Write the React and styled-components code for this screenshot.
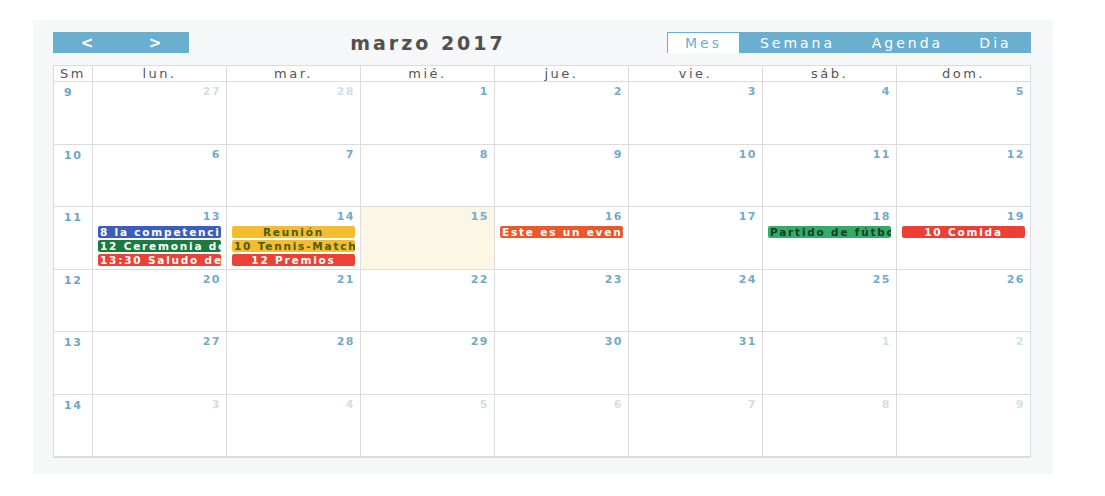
import React from "react";
import styled, { createGlobalStyle } from "styled-components";

const Global = createGlobalStyle`
  body {
    margin: 0;
    background: #ffffff;
    font-family: "DejaVu Sans", Verdana, sans-serif;
  }
`;

const Page = styled.div`
  padding: 20px 0 0 33px;
`;

const Panel = styled.div`
  width: 1020px;
  height: 454px;
  box-sizing: border-box;
  background: #f6f7f9;
  padding: 12px 22px 0 20px;
`;

const Toolbar = styled.div`
  display: flex;
  align-items: center;
  justify-content: space-between;
  height: 21px;
  margin-bottom: 12px;
`;

const Group = styled.div`
  display: flex;
  height: 21px;
  background: #6aafd0;
`;

const NavBtn = styled.div`
  width: 68px;
  display: flex;
  align-items: center;
  justify-content: center;
  color: #ffffff;
  font-size: 15px;
  font-weight: bold;
`;

const Title = styled.div`
  font-size: 19px;
  font-weight: bold;
  letter-spacing: 3px;
  color: #505050;
`;

const ViewBtn = styled.div`
  width: ${(p) => p.w}px;
  box-sizing: border-box;
  display: flex;
  align-items: center;
  justify-content: center;
  font-size: 14px;
  letter-spacing: 3px;
  color: ${(p) => (p.active ? "#6aafd0" : "#ffffff")};
  background: ${(p) => (p.active ? "#ffffff" : "transparent")};
  border: ${(p) => (p.active ? "1px solid #6aafd0" : "none")};
  border-bottom: none;
`;

const Table = styled.div`
  width: 978px;
  border: 1px solid #dcdcdc;
  border-right: none;
  background: #ffffff;
  box-sizing: border-box;
`;

const Row = styled.div`
  display: grid;
  grid-template-columns: 39px repeat(7, 1fr);
  height: ${(p) => p.h}px;
  border-bottom: 1px solid #dcdcdc;
`;

const HeadCell = styled.div`
  border-right: 1px solid #dcdcdc;
  text-align: center;
  font-size: 13px;
  letter-spacing: 2.5px;
  color: #555555;
  line-height: 15px;
`;

const WeekCell = styled.div`
  border-right: 1px solid #dcdcdc;
  font-size: 11px;
  font-weight: bold;
  letter-spacing: 1.5px;
  color: #6aa6c6;
  padding: 4px 0 0 10px;
`;

const DayCell = styled.div`
  border-right: 1px solid #dcdcdc;
  background: ${(p) => (p.today ? "#fcf7e4" : "transparent")};
  padding: 4px 5px 0 5px;
  min-width: 0;
  display: flex;
  flex-direction: column;
`;

const DayNum = styled.div`
  text-align: right;
  font-size: 11px;
  font-weight: bold;
  letter-spacing: 1.5px;
  line-height: 12px;
  color: ${(p) => (p.other ? "#cfe0ea" : "#72abc9")};
  margin-bottom: 3px;
`;

const Event = styled.div`
  height: 12px;
  line-height: 12px;
  margin-bottom: 2px;
  border-radius: 2px;
  font-size: 10.5px;
  font-weight: bold;
  letter-spacing: 1.8px;
  white-space: nowrap;
  overflow: hidden;
  padding: 0 2px;
  text-align: ${(p) => (p.center ? "center" : "left")};
  background: ${(p) => p.bg};
  color: ${(p) => p.fg || "#ffffff"};
`;

const heads = ["lun.", "mar.", "mié.", "jue.", "vie.", "sáb.", "dom."];

const weeks = [
  { n: 9, days: [[27, 1], [28, 1], [1], [2], [3], [4], [5]] },
  { n: 10, days: [[6], [7], [8], [9], [10], [11], [12]] },
  { n: 11, days: [[13], [14], [15], [16], [17], [18], [19]] },
  { n: 12, days: [[20], [21], [22], [23], [24], [25], [26]] },
  { n: 13, days: [[27], [28], [29], [30], [31], [1, 1], [2, 1]] },
  { n: 14, days: [[3, 1], [4, 1], [5, 1], [6, 1], [7, 1], [8, 1], [9, 1]] },
];

const events = {
  13: [
    { t: "8 la competencia", bg: "#3b5dbe" },
    { t: "12 Ceremonia de apertura", bg: "#1b7b3e" },
    { t: "13:30 Saludo de bienvenida", bg: "#ea4236" },
  ],
  14: [
    { t: "Reunión", bg: "#f4bc2f", fg: "#4d5a10", center: true },
    { t: "10 Tennis-Match", bg: "#f4bc2f", fg: "#4d5a10" },
    { t: "12 Premios", bg: "#ea4236", center: true },
  ],
  16: [{ t: "Este es un evento largo", bg: "#e9592b" }],
  18: [{ t: "Partido de fútbol", bg: "#33ab6c", fg: "#173f20" }],
  19: [{ t: "10 Comida", bg: "#ec3f36", center: true }],
};

export default function App() {
  return (
    <Page>
      <Global />
      <Panel>
        <Toolbar>
          <Group>
            <NavBtn>&lt;</NavBtn>
            <NavBtn>&gt;</NavBtn>
          </Group>
          <Title>marzo 2017</Title>
          <Group>
            <ViewBtn w={73} active>Mes</ViewBtn>
            <ViewBtn w={115}>Semana</ViewBtn>
            <ViewBtn w={105}>Agenda</ViewBtn>
            <ViewBtn w={71}>Dia</ViewBtn>
          </Group>
        </Toolbar>
        <Table>
          <Row h={15}>
            <HeadCell>Sm</HeadCell>
            {heads.map((h) => (
              <HeadCell key={h}>{h}</HeadCell>
            ))}
          </Row>
          {weeks.map((w) => (
            <Row h={61.5} key={w.n}>
              <WeekCell>{w.n}</WeekCell>
              {w.days.map(([d, other]) => {
                const evs = !other && w.n === 11 ? events[d] || [] : [];
                return (
                  <DayCell key={d + "-" + (other ? "o" : "c")} today={!other && d === 15}>
                    <DayNum other={other}>{d}</DayNum>
                    {evs.map((e) => (
                      <Event key={e.t} bg={e.bg} fg={e.fg} center={e.center}>
                        {e.t}
                      </Event>
                    ))}
                  </DayCell>
                );
              })}
            </Row>
          ))}
        </Table>
      </Panel>
    </Page>
  );
}
